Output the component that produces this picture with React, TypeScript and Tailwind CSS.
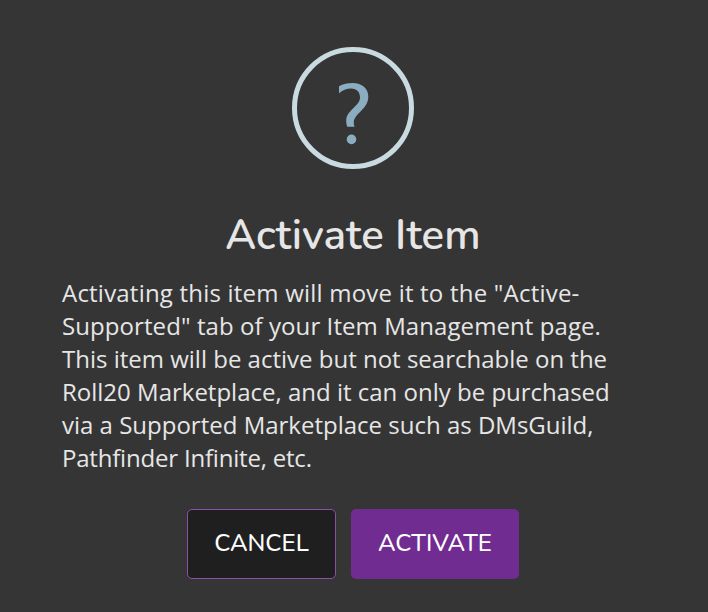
import React, { useState } from 'react';

export const ActivateItemDialog = () => {
  const [open, setOpen] = useState(true);

  if (!open) return null;

  return (
    <div role="dialog" className="w-[708px] h-[612px] bg-[#353535] pt-[47px] pr-[2px] flex flex-col items-center overflow-hidden">
      <svg width="122" height="122" viewBox="0 0 122 122" className="shrink-0" fill="none">
        <circle cx="61" cy="61" r="58.5" stroke="#c9dae1" strokeWidth="5" />
        <path d="M47 39.300C51 37 55.500 36 60.700 36C70 36 76.300 41.500 76.300 49.500C76.300 55.500 73.500 59.500 69 64C64 69 61.800 71.500 61.800 75.500C61.800 77.500 62 78.700 62.700 79.800H55.300C54.600 78 54.200 76 54.200 73.500C54.200 68.500 57 65.500 61.500 61C65.500 57 68 54.500 68 50.500C68 45 64.800 41.500 59.300 41.500C54.500 41.500 50.500 43.300 47 46.300Z" fill="#8aadbf" />
        <circle cx="59.500" cy="92.400" r="4.800" fill="#8aadbf" />
      </svg>

      <h2 className="mt-[40px] h-[54px] leading-[54px] text-[42px] tracking-[0.08px] font-semibold text-[#e6e6e6] whitespace-nowrap font-['Nunito','Noto_Sans',sans-serif]">
        Activate Item
      </h2>

      <div className="mt-[13px] w-[582px] text-[24px] leading-[33px] text-[#e6e6e6] whitespace-nowrap font-['Open_Sans',sans-serif]">
        <div className="tracking-[0.21px]">Activating this item will move it to the "Active-</div>
        <div className="tracking-[0.08px]">Supported" tab of your Item Management page.</div>
        <div>This item will be active but not searchable on the</div>
        <div>Roll20 Marketplace, and it can only be purchased</div>
        <div>via a Supported Marketplace such as DMsGuild,</div>
        <div className="tracking-[-0.2px]">Pathfinder Infinite, etc.</div>
      </div>

      <div className="mt-[35px] flex gap-[15px] text-[24px] font-medium text-white font-['Nunito','Noto_Sans',sans-serif]">
        <button onClick={() => setOpen(false)} className="w-[149px] h-[70px] pb-[2px] rounded-[5px] border border-[#8a50a8] bg-[#1f1f1f]">
          CANCEL
        </button>
        <button onClick={() => setOpen(false)} className="w-[168px] h-[70px] pb-[2px] rounded-[5px] bg-[#702c91]">
          ACTIVATE
        </button>
      </div>
    </div>
  );
};

export default ActivateItemDialog;
